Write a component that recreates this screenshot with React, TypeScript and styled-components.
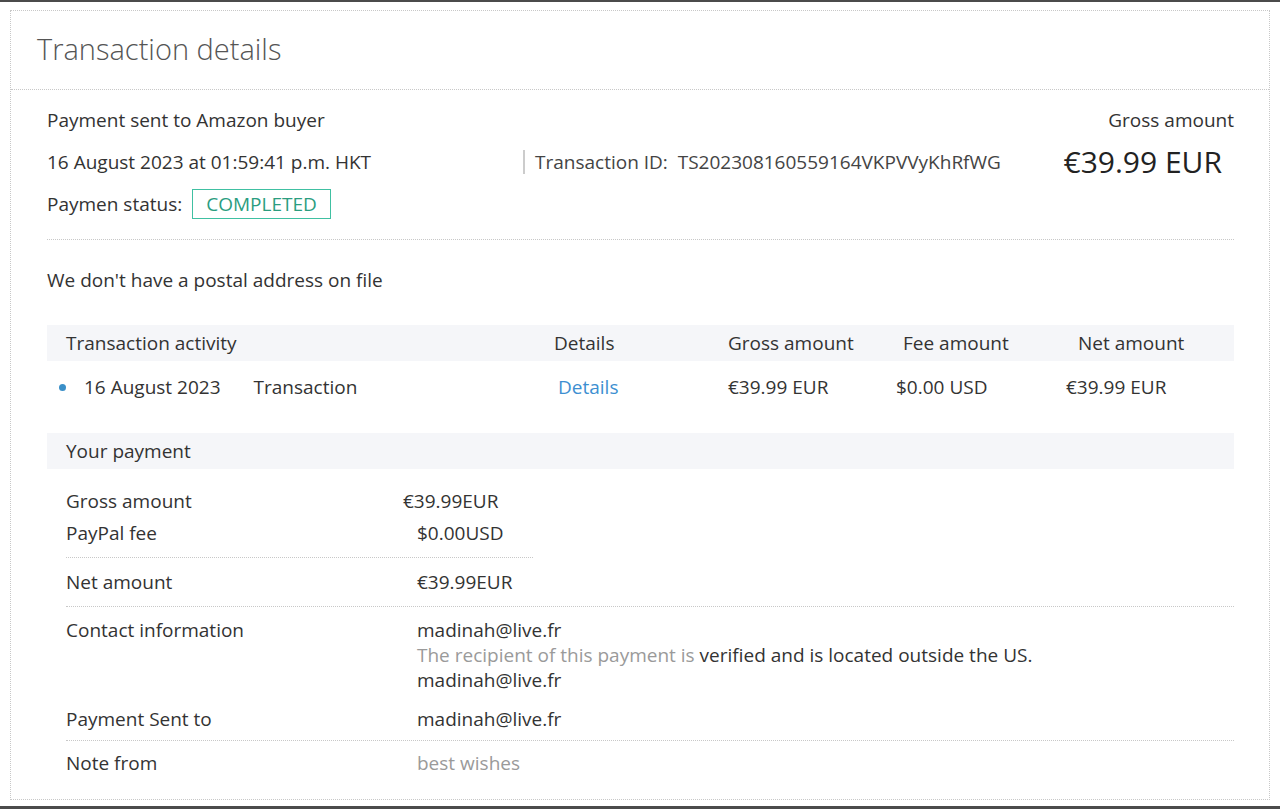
import styled, {createGlobalStyle} from 'styled-components';

const GlobalStyle = createGlobalStyle`
  html, body {
    margin: 0;
    padding: 0;
    background: #fff;
  }
  body {
    font-family: "Open Sans", Lato, "Liberation Sans", sans-serif;
    color: #333;
    font-size: 19px;
  }
  * {
    box-sizing: border-box;
  }
`;

const Frame = styled.div`
  height: 809px;
  border-top: 2px solid #4b4b4b;
  border-bottom: 3px solid #4b4b4b;
  padding: 8px 10px 6px;
  display: flex;
  flex-direction: column;
`;

const Card = styled.div`
  flex: 1;
  border: 1px dotted #c8c8c8;
  display: flex;
  flex-direction: column;
`;

const CardHeader = styled.div`
  height: 79px;
  padding: 0 0 4px 26px;
  display: flex;
  align-items: center;
  border-bottom: 1px dotted #c8c8c8;
`;

const Title = styled.h1`
  margin: 0;
  font-size: 29px;
  font-weight: 300;
  color: #555;
`;

const CardBody = styled.div`
  padding: 0 35px 0 36px;
`;

const Summary = styled.div`
  padding: 19px 0 24px;
  border-bottom: 1px dotted #c8c8c8;
  display: flex;
  flex-direction: column;
  gap: 20px;
`;

const SummaryRow = styled.div`
  display: flex;
  align-items: center;
  height: 22px;
  line-height: 22px;
`;

const Spread = styled(SummaryRow)`
  justify-content: space-between;
`;

const DateText = styled.div`
  width: 476px;
`;

const TxId = styled.div`
  border-left: 2px solid #ccc;
  padding-left: 10px;
  height: 24px;
  line-height: 24px;
  color: #444;
`;

const BigAmount = styled.div`
  margin-left: auto;
  margin-right: 12px;
  font-size: 30px;
  color: #222;
`;

const Badge = styled.span`
  margin-left: 10px;
  border: 1px solid #40c0a2;
  color: #2b9d80;
  height: 30px;
  line-height: 28px;
  padding: 0 13px;
`;

const Notice = styled.p`
  margin: 29px 0 34px;
  line-height: 22px;
`;

const TableRow = styled.div<{$cols: string; $head?: boolean}>`
  display: grid;
  grid-template-columns: ${p => p.$cols};
  align-items: center;
  height: ${p => (p.$head ? '36px' : '52px')};
  background: ${p => (p.$head ? '#f5f6f9' : 'transparent')};
  margin-bottom: ${p => (p.$head ? '0' : '20px')};
`;

const Cell = styled.div<{$indent?: number}>`
  padding-left: ${p => p.$indent || 0}px;
  white-space: nowrap;
`;

const Activity = styled.div`
  display: flex;
  align-items: center;
  padding-left: 12px;
`;

const Dot = styled.span`
  width: 7px;
  height: 7px;
  border-radius: 50%;
  background: #3a8fc8;
  margin-right: 18px;
`;

const TypeText = styled.span`
  margin-left: 33px;
`;

const Link = styled.a`
  color: #3d8fd1;
  text-decoration: none;
  padding-left: 2px;
`;

const SectionBar = styled.div`
  height: 36px;
  line-height: 36px;
  padding-left: 19px;
  background: #f5f6f9;
`;

const Block = styled.div<{$pad: string; $line?: 'short' | 'full'; $lh: number}>`
  margin-left: 19px;
  padding: ${p => p.$pad};
  line-height: ${p => p.$lh}px;
  width: ${p => (p.$line === 'short' ? '467px' : 'auto')};
  border-bottom: ${p => (p.$line ? '1px dotted #c8c8c8' : 'none')};
`;

const InfoRow = styled.div<{$gap?: number}>`
  display: grid;
  grid-template-columns: 351px 1fr;
  margin-top: ${p => p.$gap || 0}px;
`;

const Value = styled.div<{$shift?: number; $muted?: boolean}>`
  margin-left: ${p => -(p.$shift || 0)}px;
  color: ${p => (p.$muted ? '#9a9a9a' : '#333')};
`;

const Muted = styled.span`
  color: #9a9a9a;
`;

const headCols = '507px 174px 175px 175px 1fr';
const rowCols = '509px 172px 168px 170px 1fr';

export default function App() {
    return (
        <>
            <GlobalStyle />
            <Frame>
                <Card>
                    <CardHeader>
                        <Title>Transaction details</Title>
                    </CardHeader>
                    <CardBody>
                        <Summary>
                            <Spread>
                                <span>Payment sent to Amazon buyer</span>
                                <span>Gross amount</span>
                            </Spread>
                            <SummaryRow>
                                <DateText>16 August 2023 at 01:59:41 p.m. HKT</DateText>
                                <TxId>Transaction ID:&nbsp; TS202308160559164VKPVVyKhRfWG</TxId>
                                <BigAmount>€39.99 EUR</BigAmount>
                            </SummaryRow>
                            <SummaryRow>
                                Paymen status: <Badge>COMPLETED</Badge>
                            </SummaryRow>
                        </Summary>

                        <Notice>We don't have a postal address on file</Notice>

                        <TableRow $cols={headCols} $head>
                            <Cell $indent={19}>Transaction activity</Cell>
                            <Cell>Details</Cell>
                            <Cell>Gross amount</Cell>
                            <Cell>Fee amount</Cell>
                            <Cell>Net amount</Cell>
                        </TableRow>
                        <TableRow $cols={rowCols}>
                            <Activity>
                                <Dot />
                                16 August 2023
                                <TypeText>Transaction</TypeText>
                            </Activity>
                            <Cell><Link href="#">Details</Link></Cell>
                            <Cell>€39.99 EUR</Cell>
                            <Cell>$0.00 USD</Cell>
                            <Cell>€39.99 EUR</Cell>
                        </TableRow>

                        <SectionBar>Your payment</SectionBar>

                        <Block $pad="16px 0 8px" $line="short" $lh={32}>
                            <InfoRow>
                                <span>Gross amount</span>
                                <Value $shift={14}>€39.99EUR</Value>
                            </InfoRow>
                            <InfoRow>
                                <span>PayPal fee</span>
                                <Value>$0.00USD</Value>
                            </InfoRow>
                        </Block>
                        <Block $pad="8px 0 8px" $line="full" $lh={32}>
                            <InfoRow>
                                <span>Net amount</span>
                                <Value>€39.99EUR</Value>
                            </InfoRow>
                        </Block>
                        <Block $pad="11px 0 8px" $line="full" $lh={25}>
                            <InfoRow>
                                <span>Contact information</span>
                                <Value>
                                    madinah@live.fr<br />
                                    <Muted>The recipient of this payment is</Muted> verified and is located outside the US.<br />
                                    madinah@live.fr
                                </Value>
                            </InfoRow>
                            <InfoRow $gap={14}>
                                <span>Payment Sent to</span>
                                <Value>madinah@live.fr</Value>
                            </InfoRow>
                        </Block>
                        <Block $pad="10px 0 0" $lh={25}>
                            <InfoRow>
                                <span>Note from</span>
                                <Value $muted>best wishes</Value>
                            </InfoRow>
                        </Block>
                    </CardBody>
                </Card>
            </Frame>
        </>
    );
}
